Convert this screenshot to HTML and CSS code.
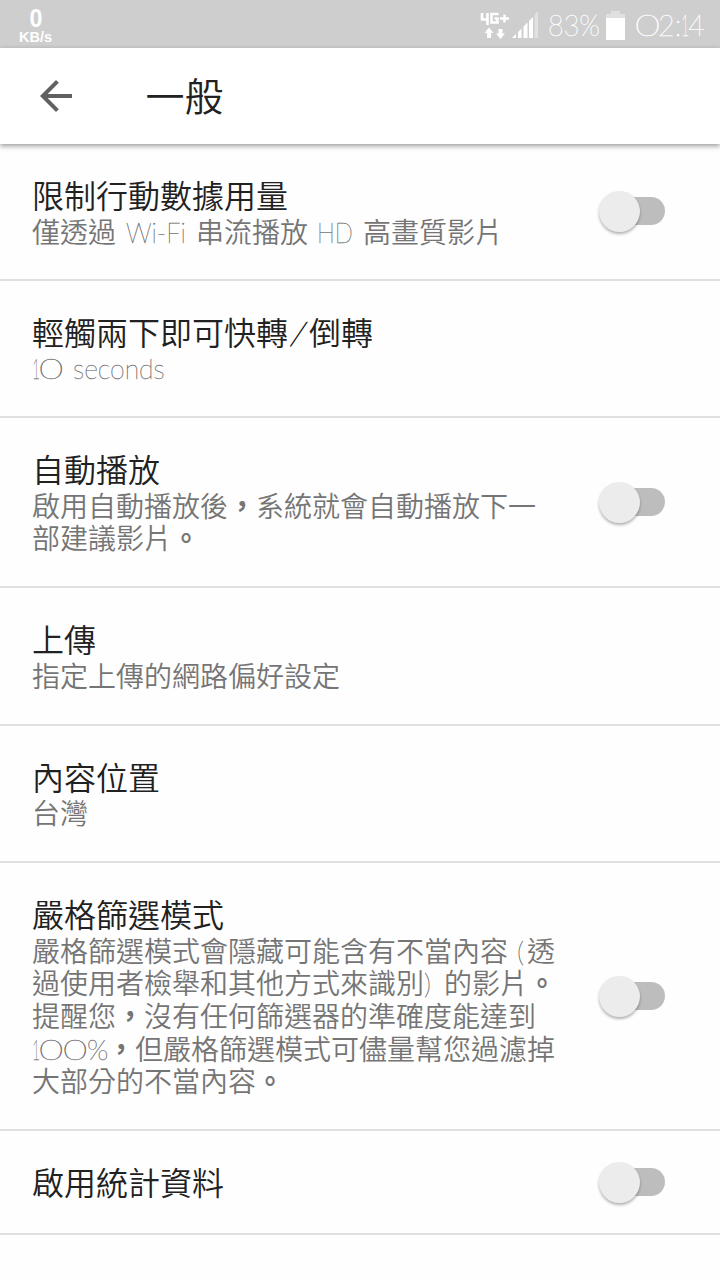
FILE: index.html
```html
<!DOCTYPE html>
<html lang="zh-TW">
<head>
<meta charset="utf-8">
<title>一般</title>
<link rel="stylesheet" href="styles.css">
</head>
<body>
<div class="status">
  <div class="speed"><span class="speed-num">0</span><span class="speed-unit">KB/s</span></div>
  <div class="status-right">
    <svg class="net" width="30" height="30" viewBox="0 0 30 30" fill="none" stroke="#fff">
      <path d="M2 1v6.500h6.500M7.500 1v12M18.500 2h-7v8.500h6v-4h-3" stroke-width="2.500"/>
      <path d="M20 6.500h9M24.500 2.500v8" stroke-width="2.300"/>
      <path d="M4.500 21L9 15.500l4.500 5.500h-2.500v5H7v-5zM16 21.500h2.500V17h4v4.500h2.500L20.500 27z" fill="#fff" stroke="none"/>
    </svg>
    <svg class="signal" width="27" height="28" viewBox="0 0 27 28" fill="#fff">
      <path d="M0 28l4-4v4zM6 22l3.500-3.500V28H6zM11.500 16.500l4-4V28h-4zM17 11l4-4v21h-4z"/>
      <path d="M22.500 5L26 1v27h-3.500z" opacity=".4"/>
    </svg>
    <span class="battery-text thin">83%</span>
    <svg class="battery" width="19" height="29" viewBox="0 0 19 29"><path d="M5 0h9v3h5v5H0V3h5z" fill="#e2dfe3"/><path d="M0 7h19v22H0z" fill="#fff"/></svg>
    <span class="clock thin"><span class="zero">0</span>2:<span class="one">1</span>4</span>
  </div>
</div>
<header class="bar">
  <svg class="back" width="48" height="48" viewBox="0 0 24 24" fill="#616161"><path d="M20 11H7.830l5.590-5.590L12 4l-8 8 8 8 1.410-1.410L7.830 13H20v-2z"/></svg>
  <h1 class="bar-title">一般</h1>
</header>
<main class="list">
  <section class="row">
    <div class="text"><h2 class="title">限制行動數據用量</h2>
    <p class="sub">僅透過<span class="thin wifi">Wi-Fi</span>串流播放<span class="thin hd">HD</span>高畫質影片</p></div>
    <div class="switch"></div>
  </section>
  <section class="row">
    <div class="text"><h2 class="title">輕觸兩下即可快轉<span class="thin slash">/</span>倒轉</h2>
    <p class="sub"><span class="thin ten"><span class="one">1</span><span class="zero">0</span></span><span class="thin seconds">seconds</span></p></div>
  </section>
  <section class="row two">
    <div class="text"><h2 class="title">自動播放</h2>
    <p class="sub">啟用自動播放後<b>，</b>系統就會自動播放下一<br>部建議影片<b>。</b></p></div>
    <div class="switch"></div>
  </section>
  <section class="row">
    <div class="text"><h2 class="title">上傳</h2>
    <p class="sub">指定上傳的網路偏好設定</p></div>
  </section>
  <section class="row">
    <div class="text"><h2 class="title">內容位置</h2>
    <p class="sub">台灣</p></div>
  </section>
  <section class="row five">
    <div class="text"><h2 class="title">嚴格篩選模式</h2>
    <p class="sub">嚴格篩選模式會隱藏可能含有不當內容<span class="thin open">(</span>透<br>過使用者檢舉和其他方式來識別<span class="thin close">)</span>的影片<b>。</b><br>提醒您<b>，</b>沒有任何篩選器的準確度能達到<br><span class="thin hundred"><span class="one">1</span><span class="zero">0</span><span class="zero">0</span>%</span><b>，</b>但嚴格篩選模式可儘量幫您過濾掉<br>大部分的不當內容<b>。</b></p></div>
    <div class="switch"></div>
  </section>
  <section class="row single">
    <div class="text"><h2 class="title">啟用統計資料</h2></div>
    <div class="switch"></div>
  </section>
</main>
</body>
</html>
```
FILE: styles.css
```css
* { box-sizing: border-box; }
body {
  margin: 0;
  height: 1280px;
  overflow: hidden;
  background: #fefefe;
  color: #212121;
  font-family: "Noto Sans CJK TC", sans-serif;
}
h1, h2, p { margin: 0; font-weight: 350; }
.thin {
  display: inline-block;
  font-family: Lato, "Noto Sans CJK TC", sans-serif;
  font-weight: 100;
  line-height: 1;
  white-space: nowrap;
  transform-origin: 0 50%;
  -webkit-text-stroke: .4px currentColor;
}
.zero {
  display: inline-block;
  width: 24px;
  transform: scaleX(1.5);
  transform-origin: 0 50%;
}
.one { display: inline-block; width: 7px; transform: scaleX(.5); transform-origin: 0 50%; }
.status {
  height: 48px;
  background: #cecece;
  color: #fff;
  display: flex;
  justify-content: space-between;
}
.speed {
  width: 71px;
  padding-top: 7px;
  display: flex;
  flex-direction: column;
  align-items: center;
  font-family: "Liberation Sans", Arial, sans-serif;
  font-weight: 700;
}
.speed-num { font-size: 25px; line-height: 23px; transform: scaleX(.93); }
.speed-unit { font-size: 14.500px; line-height: 14px; }
.status-right { display: flex; align-items: flex-start; width: 240px; }
.net { margin-top: 12px; }
.signal { margin: 10px 0 0 2px; }
.battery-text { width: 53px; margin: 9px 0 0 9px; font-size: 30px; transform: scaleX(.9); }
.battery { margin: 11px 0 0 5px; }
.clock { margin: 9px 0 0 10px; font-size: 30px; transform: scaleX(.96); }
.bar {
  position: relative;
  height: 96px;
  padding-left: 32px;
  display: flex;
  align-items: center;
  background: #fff;
  box-shadow: 0 2px 5px rgba(0, 0, 0, .4);
}
.bar-title { margin: -5px 0 0 65.500px; font-size: 39px; line-height: 48px; }
.row {
  height: 137.500px;
  padding: 31px 55px 0 32px;
  border-bottom: 2px solid #e0e0e0;
  display: flex;
  justify-content: space-between;
}
.row:first-child { height: 136.500px; }
.two { height: 170px; }
.five { height: 268px; }
.single { height: 104px; }
.title { font-size: 32px; line-height: 38px; white-space: nowrap; }
.sub { padding-top: 1.500px; font-size: 28px; line-height: 32.700px; color: #757575; white-space: nowrap; }
.sub b { font-weight: 700; }
.wifi { width: 80px; margin-left: 10px; margin-right: -10px; transform: scaleX(.91); }
.hd { width: 46px; margin-left: 9px; transform: scaleX(.85); }
.slash { width: 21px; transform: scaleX(1.6); }
.ten { width: 41px; }
.seconds { transform: scaleX(.95); }
.open { width: 10px; margin-left: 9px; }
.close { width: 20px; }
.hundred { width: 75px; }
.switch {
  align-self: center;
  margin-top: -31px;
  width: 60px;
  height: 28px;
  border-radius: 14px;
  background: #bdbdbd;
}
.switch::before {
  content: "";
  display: block;
  width: 41px;
  height: 41px;
  margin: -6px 0 0 -6px;
  border-radius: 50%;
  background: #ececec;
  box-shadow: 0 2px 3px rgba(0, 0, 0, .3);
}
```
